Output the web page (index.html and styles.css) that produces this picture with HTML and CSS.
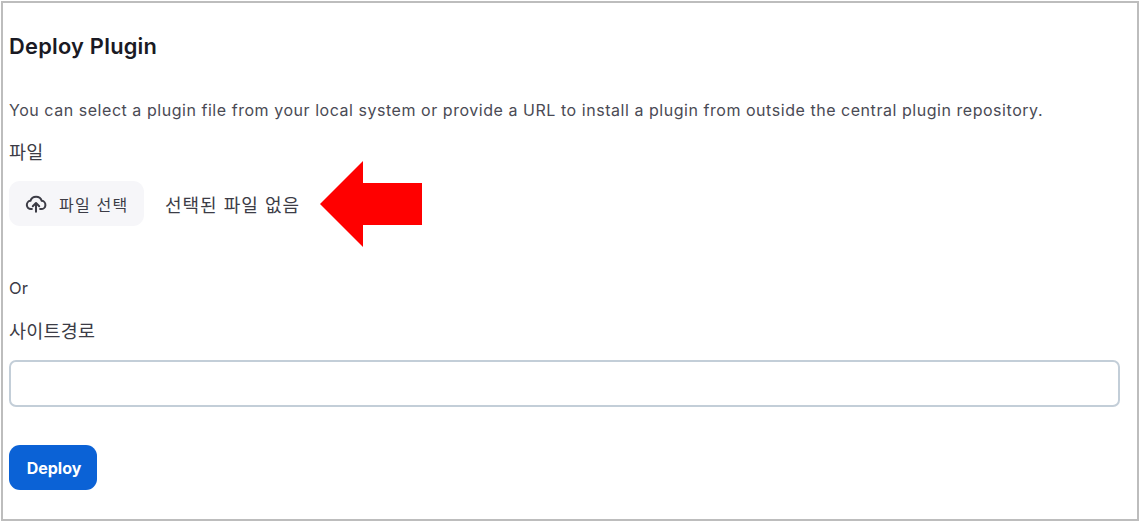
FILE: index.html
```html
<!DOCTYPE html>
<html lang="ko">
<head>
    <meta charset="UTF-8">
    <meta name="viewport" content="width=device-width, initial-scale=1.0">
    <title>Deploy Plugin</title>
    <link rel="stylesheet" href="styles.css">
</head>
<body>
    <div class="frame">
        <h1 class="title">Deploy Plugin</h1>
        <p class="desc">You can select a plugin file from your local system or provide a URL to install a plugin from outside the central plugin repository.</p>

        <div class="label file-label">파일</div>
        <div class="file-row">
            <div class="file-btn">
                <svg class="cloud" viewBox="0 0 24 24" fill="none" stroke="currentColor" stroke-width="2.2" stroke-linecap="round" stroke-linejoin="round">
                    <path d="M7.5 17.5H6.5a4.5 4.5 0 0 1-.6-8.96 6.5 6.5 0 0 1 12.4 0 4.5 4.5 0 0 1-.8 8.96h-1"/>
                    <path d="M12 20.5V11.5M8.5 14.5l3.5-3.5 3.5 3.5"/>
                </svg>
                <span>파일 선택</span>
            </div>
            <span class="file-none">선택된 파일 없음</span>
        </div>

        <div class="label or-label">Or</div>
        <div class="label url-label">사이트경로</div>
        <input class="url-input" type="text">

        <button class="deploy-btn">Deploy</button>

        <!-- annotation arrow drawn over the screenshot -->
        <svg class="arrow" viewBox="0 0 102 86"><polygon points="0,43 43,0 43,22 102,22 102,64 43,64 43,86" fill="#ff0000"/></svg>
    </div>
</body>
</html>
```

FILE: styles.css
```css
* {
    box-sizing: border-box;
}
html, body {
    height: 100%;
}
body {
    margin: 0;
    padding: 1px;
    background: #fff;
    font-family: Inter, "Noto Sans CJK KR", sans-serif;
    color: #14141f;
    overflow: hidden;
}
.frame {
    position: relative;
    height: 520px;
    border: 2px solid #bdbdbd;
    padding: 0 17px 0 6px;
}
.title {
    margin: 31px 0 0;
    font-size: 21.8px;
    line-height: 24px;
    font-weight: 600;
    color: #1a1a24;
    letter-spacing: 0.25px;
}
.desc {
    margin: 41px 0 0;
    font-size: 16px;
    line-height: 22px;
    color: #4a4a54;
    letter-spacing: 0.54px;
    white-space: nowrap;
}
.label {
    font-size: 18.5px;
    line-height: 22px;
    color: #3c3c46;
    letter-spacing: 0.2px;
}
.file-label {
    margin-top: 20px;
}
.file-row {
    display: flex;
    align-items: center;
    margin-top: 18px;
}
.file-btn {
    display: flex;
    align-items: center;
    gap: 12px;
    width: 135px;
    height: 45px;
    padding-left: 16px;
    background: #f6f6f9;
    border-radius: 11px;
    font-size: 16px;
    color: #3c3c46;
    letter-spacing: 1.2px;
}
.cloud {
    width: 22px;
    height: 22px;
}
.file-none {
    margin-left: 21px;
    font-size: 18px;
    color: #3c3c46;
    letter-spacing: 1px;
}
.or-label {
    margin-top: 51px;
    font-size: 16.5px;
}
.url-label {
    margin-top: 21px;
}
.url-input {
    display: block;
    width: 100%;
    height: 47px;
    margin-top: 18px;
    border: 2px solid #c3ced8;
    border-radius: 7px;
    background: #fff;
}
.deploy-btn {
    display: block;
    width: 88px;
    height: 45px;
    margin-top: 38px;
    padding-left: 8px;
    border: none;
    border-radius: 11px;
    background: #0b62d6;
    color: #fff;
    font-family: Inter, sans-serif;
    font-size: 16px;
    font-weight: 700;
}
.arrow {
    position: absolute;
    left: 317px;
    top: 158px;
    width: 102px;
    height: 86px;
}
```
